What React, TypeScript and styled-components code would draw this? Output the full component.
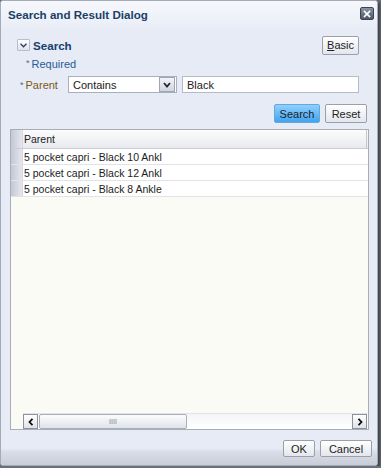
import React from "react";
import styled, { createGlobalStyle } from "styled-components";

const GlobalStyle = createGlobalStyle`
  html, body {
    margin: 0;
    padding: 0;
    background: #6b6f78;
  }
  body {
    font-family: "Liberation Sans", Arial, sans-serif;
    font-size: 10.5px;
  }
`;

const FONT = `"Liberation Sans", Arial, sans-serif`;

const Dialog = styled.div`
  width: 376px;
  height: 464px;
  border: 1px solid #a3abbb;
  border-radius: 3px;
  background: #e7ebf5;
  box-shadow: 2px 2px 3px rgba(40, 44, 52, 0.7);
  display: flex;
  flex-direction: column;
  overflow: hidden;
  font-family: ${FONT};
`;

const TitleBar = styled.div`
  height: 28px;
  flex: none;
  display: flex;
  align-items: center;
  justify-content: space-between;
  padding: 0 3px 0 7px;
  background: linear-gradient(#f6f8fc, #e9edf6);
`;

const Title = styled.span`
  font-weight: bold;
  font-size: 11.6px;
  color: #1b3f66;
  margin-top: -1px;
`;

const CloseButton = styled.div`
  width: 12px;
  height: 11px;
  border-radius: 2px;
  background: linear-gradient(#8a94a4, #4d5766);
  border: 1px solid #3c4452;
  display: flex;
  align-items: center;
  justify-content: center;
  margin-top: -3px;
`;

const SearchHeader = styled.div`
  height: 20px;
  margin-top: 6px;
  padding: 0 18px 0 16px;
  display: flex;
  align-items: center;
`;

const Toggle = styled.div`
  width: 11px;
  height: 10px;
  border: 1px solid #b7bfcc;
  border-radius: 1px;
  background: linear-gradient(#ffffff, #dde2ec);
  display: flex;
  align-items: center;
  justify-content: center;
  margin-right: 3px;
`;

const SectionTitle = styled.span`
  font-weight: bold;
  font-size: 11.6px;
  color: #17406f;
  flex: 1;
`;

const Button = styled.button<{ $w: number; $h?: number; $primary?: boolean }>`
  width: ${(p) => p.$w}px;
  height: ${(p) => p.$h ?? 19}px;
  padding: 0;
  font-family: ${FONT};
  font-size: 11px;
  color: #222;
  border: 1px solid ${(p) => (p.$primary ? "#6aa6d8" : "#9aa0aa")};
  border-radius: 2px;
  background: ${(p) =>
    p.$primary
      ? "linear-gradient(#8fd0ff, #3fa4f0)"
      : "linear-gradient(#ffffff, #e3e6ec)"};
  display: flex;
  align-items: center;
  justify-content: center;
`;

const RequiredRow = styled.div`
  height: 14px;
  margin-top: 2px;
  padding-left: 25px;
  display: flex;
  align-items: center;
  color: #265b98;
  font-size: 11px;
`;

const Star = styled.span`
  color: #4d6a94;
  font-size: 9px;
  margin-right: 2px;
  align-self: flex-start;
  margin-top: 1px;
`;

const FieldRow = styled.div`
  height: 17px;
  margin-top: 5px;
  padding-left: 19px;
  display: flex;
  align-items: center;
`;

const Label = styled.label`
  width: 48px;
  display: flex;
  align-items: center;
  color: #7a5a16;
  font-size: 11px;
`;

const Select = styled.div`
  width: 103px;
  height: 15px;
  border: 1px solid #a9b0bd;
  background: #fff;
  display: flex;
  align-items: center;
  font-size: 11px;
  color: #222;
  padding-left: 4px;
`;

const SelectText = styled.span`
  flex: 1;
`;

const DropButton = styled.div`
  width: 14px;
  height: 13px;
  margin-right: 1px;
  border: 1px solid #9ea6b4;
  background: linear-gradient(#f4f5f8, #cfd4de);
  display: flex;
  align-items: center;
  justify-content: center;
`;

const TextInput = styled.div`
  width: 171px;
  height: 15px;
  margin-left: 5px;
  border: 1px solid #b4bac6;
  background: #fff;
  padding-left: 4px;
  display: flex;
  align-items: center;
  font-size: 11px;
  color: #222;
`;

const ActionRow = styled.div<{ $top: number; $right: number }>`
  display: flex;
  justify-content: flex-end;
  gap: 5px;
  margin-top: ${(p) => p.$top}px;
  padding-right: ${(p) => p.$right}px;
`;

const Table = styled.div`
  margin: 6px 0 0 9px;
  width: 357px;
  height: 299px;
  border: 1px solid #a8adb6;
  background: #fbfbf5;
  display: flex;
  flex-direction: column;
`;

const HeaderRow = styled.div`
  height: 18px;
  display: flex;
  border-bottom: 1px solid #c9ccd2;
  background: linear-gradient(#fcfcfd, #e8eaee);
`;

const Gutter = styled.div`
  width: 11px;
  flex: none;
  background: linear-gradient(to right, #c3c8d4, #e4e7ee);
  border-right: 1px solid #d4d8e0;
`;

const HeaderCell = styled.div`
  flex: 1;
  padding-left: 1px;
  display: flex;
  align-items: center;
  font-size: 10.5px;
  color: #222;
  border-right: 1px solid #c4c8cf;
  margin-right: 1px;
`;

const Row = styled.div`
  height: 15px;
  display: flex;
  border-bottom: 1px solid #e2e3e6;
  background: #fff;
`;

const Cell = styled.div`
  flex: 1;
  padding-left: 1px;
  display: flex;
  align-items: center;
  font-size: 10.5px;
  color: #1c1c1c;
`;

const Filler = styled.div`
  flex: 1;
`;

const ScrollBar = styled.div`
  height: 15px;
  margin-left: 12px;
  margin-right: 1px;
  display: flex;
  background: linear-gradient(#f4f5f7, #ffffff);
  border-top: 1px solid #e1e3e8;
`;

const ScrollArrow = styled.div`
  width: 13px;
  height: 13px;
  border: 1px solid #8c929c;
  background: linear-gradient(#ffffff, #dfe2e8);
  display: flex;
  align-items: center;
  justify-content: center;
`;

const Thumb = styled.div`
  width: 146px;
  height: 13px;
  margin-left: 1px;
  border: 1px solid #a9afba;
  border-radius: 2px;
  background: linear-gradient(#fbfcfd, #dfe3ea);
  display: flex;
  align-items: center;
  justify-content: center;
  font-size: 7px;
  color: #7a808a;
`;

const Track = styled.div`
  flex: 1;
`;

const Footer = styled.div`
  flex: 1;
  display: flex;
  flex-direction: column;
  background: linear-gradient(#e7ebf5 0px, #e7ebf5 18px, #d9dde8 22px, #c9cdd8 100%);
`;

const rows = [
  "5 pocket capri - Black 10 Ankl",
  "5 pocket capri - Black 12 Ankl",
  "5 pocket capri - Black 8 Ankle",
];

export default function App() {
  return (
    <>
      <GlobalStyle />
      <Dialog>
        <TitleBar>
          <Title>Search and Result Dialog</Title>
          <CloseButton>
            <svg width="8" height="8" viewBox="0 0 9 9">
              <path d="M1 1L8 8M8 1L1 8" stroke="#fff" strokeWidth="1.8" />
            </svg>
          </CloseButton>
        </TitleBar>

        <SearchHeader>
          <Toggle>
            <svg width="7" height="5" viewBox="0 0 7 5">
              <path d="M0.5 0.8L3.5 3.8L6.5 0.8" stroke="#2b3f5c" strokeWidth="1.3" fill="none" />
            </svg>
          </Toggle>
          <SectionTitle>Search</SectionTitle>
          <Button $w={37}>
            <u>B</u>asic
          </Button>
        </SearchHeader>

        <RequiredRow>
          <Star>*</Star>Required
        </RequiredRow>

        <FieldRow>
          <Label>
            <Star>*</Star>Parent
          </Label>
          <Select>
            <SelectText>Contains</SelectText>
            <DropButton>
              <svg width="8" height="6" viewBox="0 0 8 6">
                <path d="M1 1L4 4.5L7 1" stroke="#1f2a3a" strokeWidth="1.8" fill="none" />
              </svg>
            </DropButton>
          </Select>
          <TextInput>Black</TextInput>
        </FieldRow>

        <ActionRow $top={11} $right={10}>
          <Button $w={46} $primary>
            Search
          </Button>
          <Button $w={42}>Reset</Button>
        </ActionRow>

        <Table>
          <HeaderRow>
            <Gutter />
            <HeaderCell>Parent</HeaderCell>
          </HeaderRow>
          {rows.map((r) => (
            <Row key={r}>
              <Gutter />
              <Cell>{r}</Cell>
            </Row>
          ))}
          <Filler />
          <ScrollBar>
            <ScrollArrow>
              <svg width="6" height="8" viewBox="0 0 6 8">
                <path d="M4.5 0.8L1.5 4L4.5 7.2" stroke="#111" strokeWidth="1.8" fill="none" />
              </svg>
            </ScrollArrow>
            <Thumb>IIII</Thumb>
            <Track />
            <ScrollArrow>
              <svg width="6" height="8" viewBox="0 0 6 8">
                <path d="M1.5 0.8L4.5 4L1.5 7.2" stroke="#111" strokeWidth="1.8" fill="none" />
              </svg>
            </ScrollArrow>
          </ScrollBar>
        </Table>

        <Footer>
          <ActionRow $top={10} $right={5}>
            <Button $w={32} $h={17}>
              OK
            </Button>
            <Button $w={52} $h={17}>
              Cancel
            </Button>
          </ActionRow>
        </Footer>
      </Dialog>
    </>
  );
}
